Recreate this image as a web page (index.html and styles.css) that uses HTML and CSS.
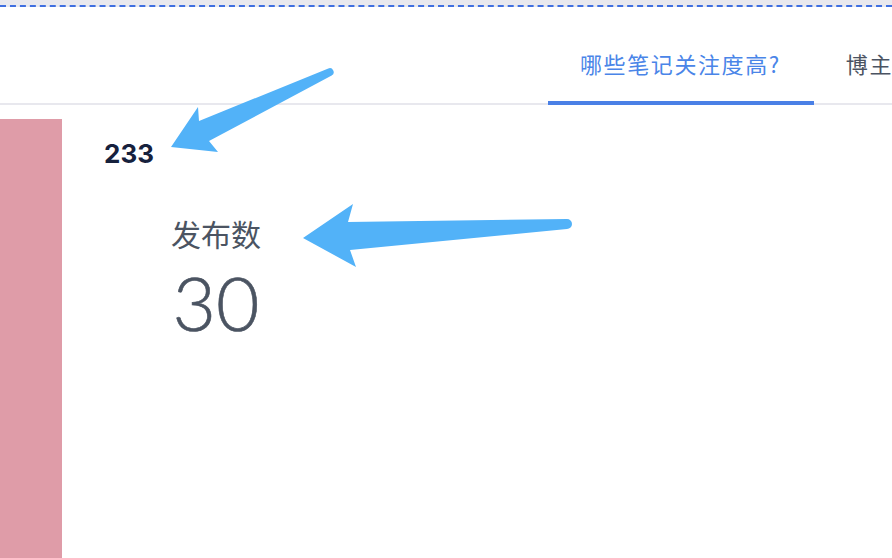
FILE: index.html
```html
<!DOCTYPE html>
<html lang="zh-CN">
  <head>
    <meta charset="UTF-8" />
    <meta name="viewport" content="width=device-width, initial-scale=1.0" />
    <title>笔记分析</title>
    <link rel="stylesheet" href="styles.css">
  </head>
  <body>
    <div class="page">
      <div class="top-strip"></div>
      <div class="tabs">
        <div class="tab active">哪些笔记关注度高?</div>
        <div class="tab">博主</div>
      </div>
      <div class="main">
        <div class="sidebar"></div>
        <div class="content">
          <div class="total">233</div>
          <div class="stat">
            <div class="stat-label">发布数</div>
            <div class="stat-value">30</div>
          </div>
        </div>
      </div>

      <!-- annotation arrows drawn over the page -->
      <svg class="arrows" width="892" height="558" viewBox="0 0 892 558">
        <path d="M171 147 L198 107 L199 121 L328.3 68.4 A4 4 0 0 1 331.7 75.6 L209 141 L218 152 Z" />
        <path d="M303 238 L353 204 L348 222 L567 219 A5 5 0 0 1 567 229 L350 250 L356 267 Z" />
      </svg>
    </div>
  </body>
</html>
```

FILE: styles.css
```css
* {
  box-sizing: border-box;
}
html,
body {
  margin: 0;
  padding: 0;
  height: 100%;
  overflow: hidden;
}
body {
  font-family: "Noto Sans CJK SC", "Noto Sans", sans-serif;
  background-color: #fff;
}
.page {
  position: relative;
  display: flex;
  flex-direction: column;
  height: 100vh;
}
.top-strip {
  height: 7px;
  background-color: #e9e9ee;
  border-bottom: 2px dashed #3f6fe0;
  flex-shrink: 0;
}
.tabs {
  display: flex;
  height: 98px;
  padding-left: 548px;
  border-bottom: 2px solid #e8e8ee;
  white-space: nowrap;
  flex-shrink: 0;
}
.tab {
  height: 98px;
  padding: 41px 33px 0 32px;
  margin-bottom: -2px;
  font-size: 22px;
  line-height: 30px;
  letter-spacing: 1.6px;
  color: #4b5362;
  border-bottom: 4px solid transparent;
  flex-shrink: 0;
}
.tab.active {
  color: #4a85e8;
  border-bottom-color: #4a80e6;
}
.main {
  flex: 1;
  display: flex;
}
.sidebar {
  width: 62px;
  margin-top: 14px;
  background-color: #df9ca8;
  flex-shrink: 0;
}
.content {
  flex: 1;
  padding: 34px 0 0 42px;
}
.total {
  font-family: Inter, "Noto Sans", sans-serif;
  font-size: 26px;
  line-height: 30px;
  font-weight: 700;
  color: #16213d;
}
.stat {
  width: 120px;
  margin: 46px 0 0 52px;
  text-align: center;
  color: #4b5462;
}
.stat-label {
  font-size: 30px;
  line-height: 36px;
}
.stat-value {
  font-family: Lato, "Noto Sans", sans-serif;
  font-weight: 300;
  font-size: 75px;
  line-height: 80px;
  margin-top: 11px;
  -webkit-text-stroke: 0.6px #4b5462;
}
.arrows {
  position: absolute;
  left: 0;
  top: 0;
  pointer-events: none;
}
.arrows path {
  fill: #52b2f8;
}
```
